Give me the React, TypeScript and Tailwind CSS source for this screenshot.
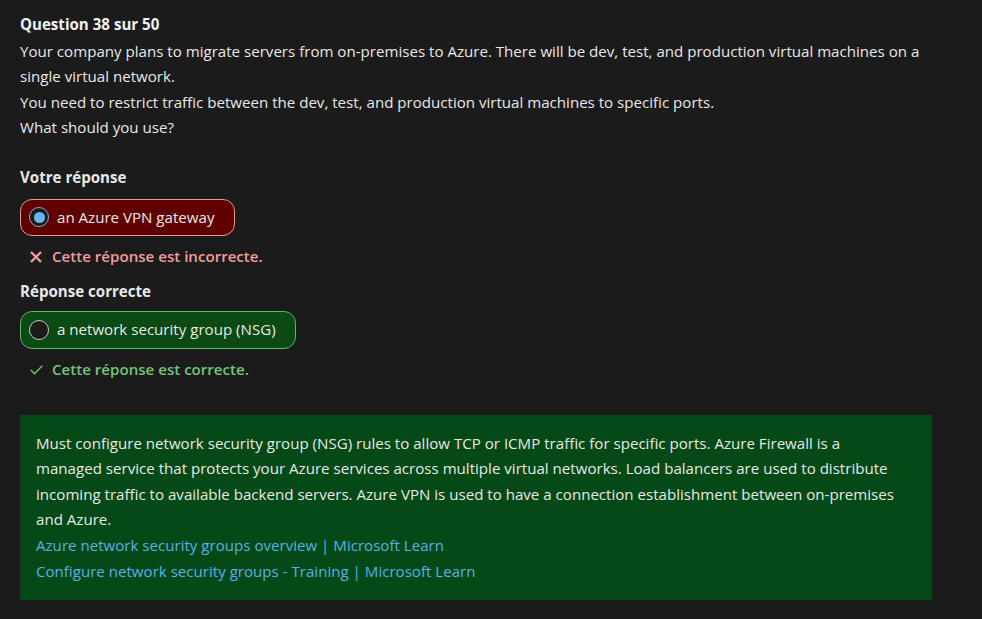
const font = { fontFamily: "'Open Sans', 'Noto Sans', sans-serif" };

const Radio = ({ checked }: { checked: boolean }) =>
    checked ? (
        <span className="flex h-5 w-5 shrink-0 items-center justify-center rounded-full border-[1.5px] border-[#8fa9c2] bg-[#1b1b1b]">
            <span className="h-[11px] w-[11px] rounded-full bg-[#6cb6ef]" />
        </span>
    ) : (
        <span className="h-5 w-5 shrink-0 rounded-full border-[1.5px] border-[#c9c9c9] bg-[#1b1b1b]" />
    );

const CrossIcon = () => (
    <svg width="14" height="12" viewBox="0 0 14 12" className="shrink-0">
        <path d="M2 1 L12 11 M12 1 L2 11" stroke="currentColor" strokeWidth="2.3" strokeLinecap="butt" fill="none" />
    </svg>
);

const CheckIcon = () => (
    <svg width="13" height="10" viewBox="0 0 13 10" className="shrink-0">
        <path d="M0.8 5 L4.5 8.8 L12.3 0.8" stroke="currentColor" strokeWidth="1.3" fill="none" />
    </svg>
);

const App = () => {
    return (
        <div className="min-h-screen bg-[#1b1b1b] px-5 pt-3 text-[15.1px] leading-[25.6px] text-[#e8e8e8]" style={font}>
            <div className="w-[912px]">
                <div className="font-bold text-[#f0f0f0]">Question 38 sur 50</div>
                <p className="mt-px">
                    Your company plans to migrate servers from on-premises to Azure. There will be dev, test, and production virtual machines on a
                    <br />
                    single virtual network.
                    <br />
                    You need to restrict traffic between the dev, test, and production virtual machines to specific ports.
                    <br />
                    What should you use?
                </p>

                <div className="mt-6 font-bold">Votre réponse</div>
                <div className="mt-2 inline-flex items-center gap-2 rounded-xl border border-[#e29a9a] bg-[#600000] py-[5px] pl-2 pr-5">
                    <Radio checked />
                    <span>an Azure VPN gateway</span>
                </div>
                <div className="mt-2 flex items-center gap-[9px] pl-[9px] font-semibold text-[#f19d9d]">
                    <CrossIcon />
                    <span>Cette réponse est incorrecte.</span>
                </div>

                <div className="mt-[9px] font-bold">Réponse correcte</div>
                <div className="mt-[7px] inline-flex items-center gap-2 rounded-xl border border-[#63b563] bg-[#0b4a12] py-[5px] pl-2 pr-[19px]">
                    <Radio checked={false} />
                    <span>a network security group (NSG)</span>
                </div>
                <div className="mt-2 flex items-center gap-[9px] pl-[10px] font-semibold text-[#74c474]">
                    <CheckIcon />
                    <span>Cette réponse est correcte.</span>
                </div>

                <div className="mt-8 bg-[#054a16] px-4 py-[16px]">
                    <p>
                        Must configure network security group (NSG) rules to allow TCP or ICMP traffic for specific ports. Azure Firewall is a
                        <br />
                        managed service that protects your Azure services across multiple virtual networks. Load balancers are used to distribute
                        <br />
                        incoming traffic to available backend servers. Azure VPN is used to have a connection establishment between on-premises
                        <br />
                        and Azure.
                    </p>
                    <div className="text-[#5aaeea]">Azure network security groups overview | Microsoft Learn</div>
                    <div className="text-[#5aaeea]">Configure network security groups - Training | Microsoft Learn</div>
                </div>
            </div>
        </div>
    );
};

export default App;
